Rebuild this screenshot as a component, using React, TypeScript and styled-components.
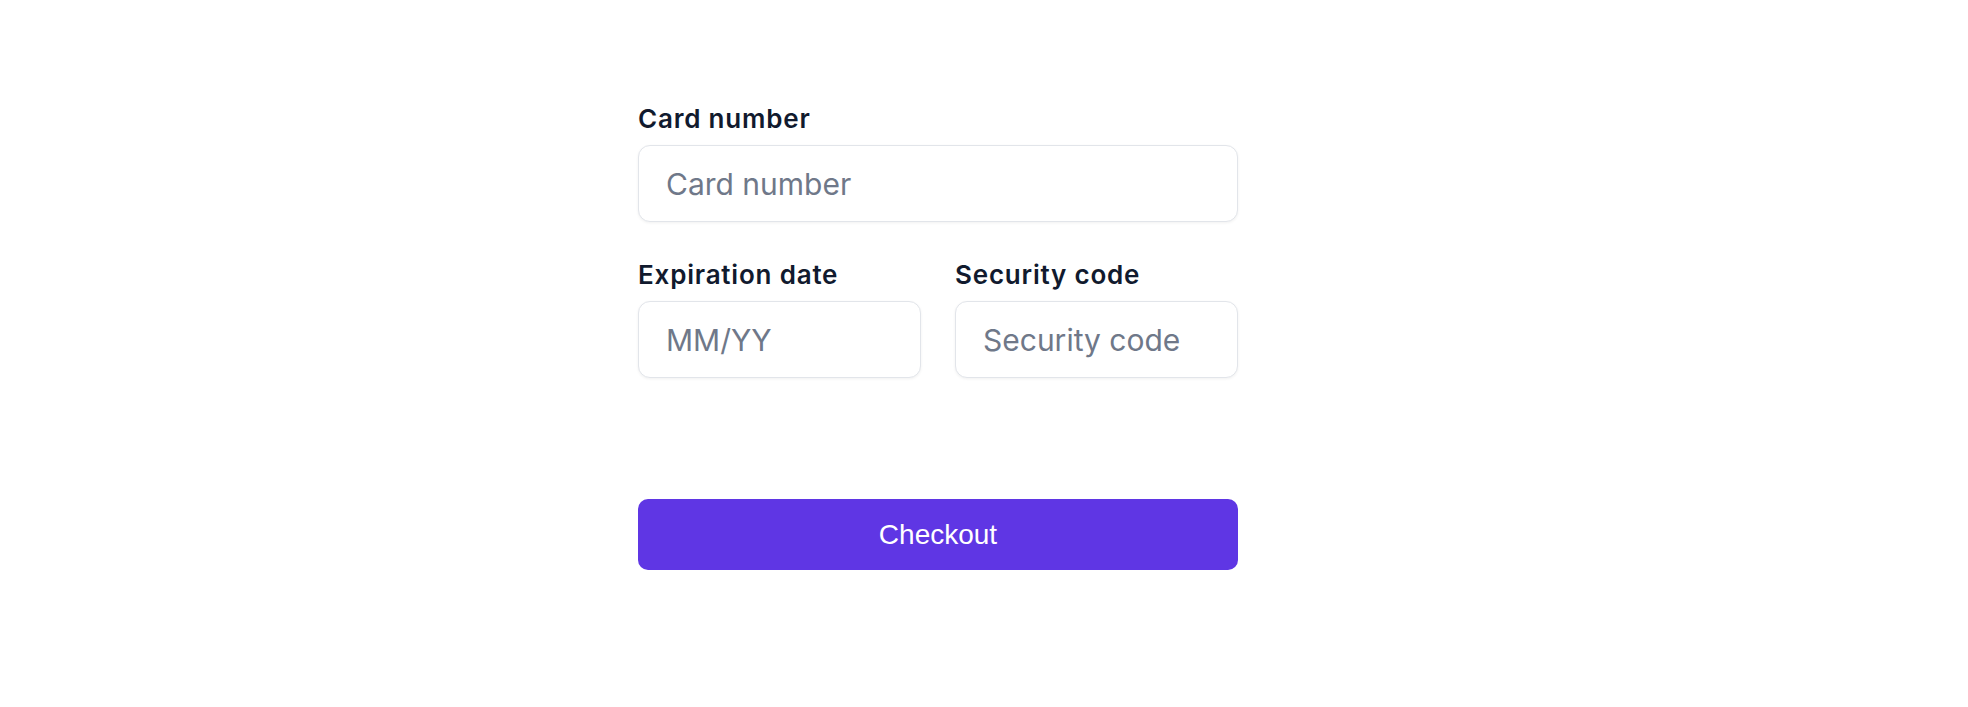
import React from 'react'
import { styled, createGlobalStyle } from 'styled-components'

const GlobalStyle = createGlobalStyle`
  html, body {
    margin: 0;
    padding: 0;
    background: #ffffff;
  }
  * {
    box-sizing: border-box;
  }
`

const App = () => {
  return (
    <Page>
      <GlobalStyle />
      <Form onSubmit={(e) => e.preventDefault()}>
        <Field>
          <Label htmlFor="card">Card number</Label>
          <Input id="card" placeholder="Card number" />
        </Field>
        <Row>
          <Field>
            <Label htmlFor="exp">Expiration date</Label>
            <Input id="exp" placeholder="MM/YY" />
          </Field>
          <Field>
            <Label htmlFor="cvc">Security code</Label>
            <Input id="cvc" placeholder="Security code" />
          </Field>
        </Row>
        <Button type="submit">Checkout</Button>
      </Form>
    </Page>
  )
}

const Page = styled.div`
  width: 100%;
  min-height: 707px;
  padding: 101px 0 0 638px;
`

const Form = styled.form`
  width: 600px;
  display: flex;
  flex-direction: column;
  gap: 35px;
`

const Row = styled.div`
  display: grid;
  grid-template-columns: 1fr 1fr;
  column-gap: 34px;
`

const Field = styled.div`
  display: flex;
  flex-direction: column;
`

const Label = styled.label`
  font-family: Inter, "Noto Sans", sans-serif;
  font-size: 26px;
  line-height: 36px;
  font-weight: 600;
  letter-spacing: 0.8px;
  color: #111a2e;
  margin-bottom: 8px;
`

const Input = styled.input`
  height: 77px;
  width: 100%;
  padding: 0 27px;
  border: 1px solid #e2e5ea;
  border-radius: 12px;
  box-shadow: 0 1px 3px rgba(0, 0, 0, 0.06);
  font-family: Inter, "Noto Sans", sans-serif;
  font-size: 30px;
  color: #111827;
  outline: none;

  &::placeholder {
    color: #6f7889;
  }
`

const Button = styled.button`
  margin-top: 86px;
  height: 71px;
  width: 100%;
  border: none;
  border-radius: 10px;
  background: #5f36e4;
  color: #ffffff;
  font-family: "Liberation Sans", Arial, sans-serif;
  font-size: 28px;
  cursor: pointer;
`

export default App
